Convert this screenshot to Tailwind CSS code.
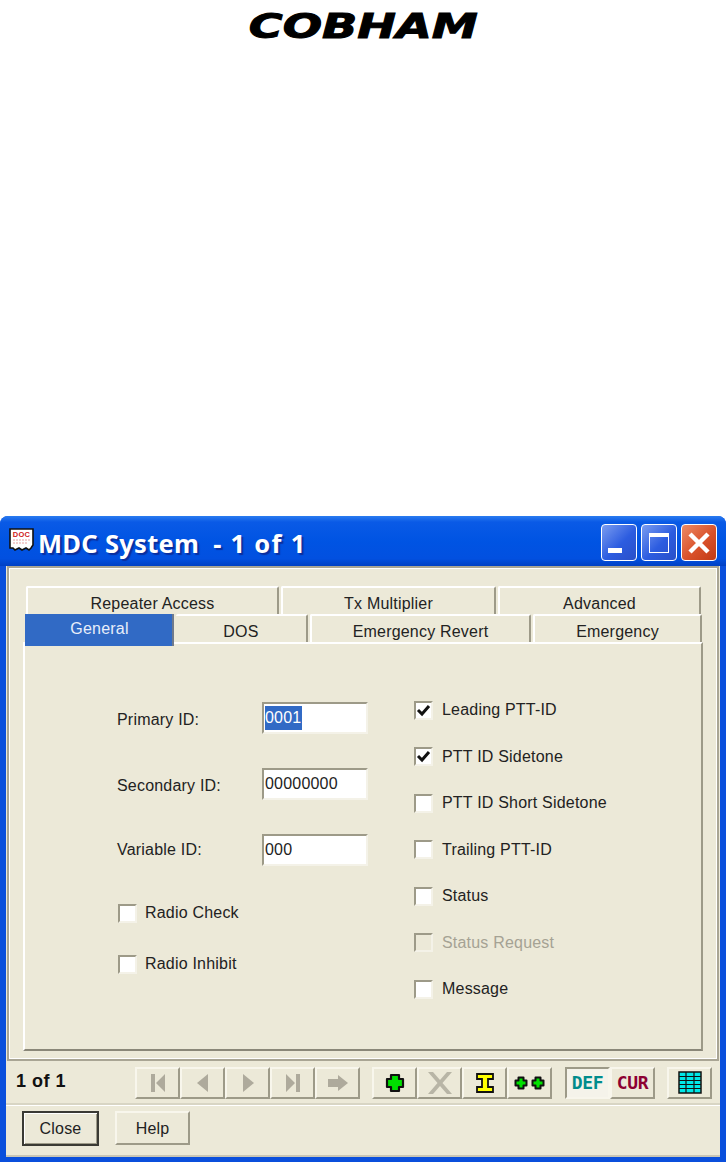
<!DOCTYPE html>
<html lang="en">
<head>
<meta charset="UTF-8">
<title>MDC System</title>
<script src="https://cdn.jsdelivr.net/npm/@tailwindcss/browser@4"></script>
</head>
<body class="bg-white font-['Liberation_Sans',sans-serif] text-[16px] tracking-[0.2px] text-[#222]">
<div class="w-[726px] h-[1162px] flex flex-col overflow-hidden">

  <!-- logo -->
  <div class="h-[516px] shrink-0 flex justify-center items-start pt-[8px]">
    <span class="font-['DejaVu_Sans',sans-serif] font-bold italic text-[34px] leading-[36px] tracking-normal text-black scale-x-[1.36] [-webkit-text-stroke:1px_black]">COBHAM</span>
  </div>

  <!-- window -->
  <div class="flex-1 flex flex-col rounded-t-[8px] bg-[#0a4fdc] px-[6px] pb-[5px]">
    <!-- title bar -->
    <div class="h-[50px] -mx-[6px] px-[9px] pt-[4px] shrink-0 flex items-center rounded-t-[8px] bg-[linear-gradient(to_bottom,#2a7cf0_0%,#0a5ae6_12%,#0054e3_50%,#0250e0_85%,#0040c4_100%)]">
      <svg class="w-[26px] h-[25px] shrink-0 -mt-[5px]" viewBox="0 0 26 25">
        <path d="M1 1H24V17L22 20L20 22L17 20L13 22L10 20L6 22L4 20H1Z" fill="#fff" stroke="#111" stroke-width="1.6"/>
        <text x="12.5" y="9" text-anchor="middle" font-family="Liberation Sans" font-weight="700" font-size="7.5" fill="#d01818">DOC</text>
        <path d="M4 12H21M4 15H19" stroke="#e8a0a0" stroke-width="1" stroke-dasharray="2 1"/>
      </svg>
      <span class="ml-[3px] font-['Noto_Sans',sans-serif] font-bold text-[25.5px] leading-[30px] tracking-[0.3px] text-white [text-shadow:2px_2px_1px_#0b2f9e] whitespace-pre">MDC System  <span class="tracking-[1.3px]">- 1 of 1</span></span>
      <div class="ml-auto flex gap-[4px] -mt-[1px]">
        <div class="w-[36px] h-[37px] rounded-[4px] border border-white flex items-end pl-[6px] pb-[7px] bg-[linear-gradient(135deg,#7a9cf0,#2c5ce0_55%,#2a4fc8)]">
          <div class="w-[14px] h-[5px] bg-white"></div>
        </div>
        <div class="w-[36px] h-[37px] rounded-[4px] border border-white flex items-center justify-center bg-[linear-gradient(135deg,#7a9cf0,#2c5ce0_55%,#2a4fc8)]">
          <div class="w-[20px] h-[20px] border border-white border-t-[4px]"></div>
        </div>
        <div class="w-[36px] h-[37px] rounded-[4px] border border-white flex items-center justify-center bg-[linear-gradient(135deg,#ec8a66,#d9512a_55%,#c23a15)]">
          <svg class="w-[24px] h-[24px]" viewBox="0 0 24 24"><path d="M3 3L21 21M21 3L3 21" stroke="#fff" stroke-width="4.5"/></svg>
        </div>
      </div>
    </div>

    <!-- client area -->
    <div class="flex-1 flex flex-col bg-[#ece9d8] min-h-0">
      <!-- sheet frame -->
      <div class="h-[495px] shrink-0 ml-[1px] mr-[1px] border-2 border-[#a9a594] px-[14px] pt-[18px] shadow-[inset_1px_1px_0_#fff,inset_-1px_-1px_0_#fff]">
        <!-- tab rows -->
        <div class="flex h-[28px] pl-[3px] gap-[2px]">
          <div class="w-[253px] flex items-center justify-center pt-[6px] rounded-t-[2px] border-t-2 border-l-2 border-r-2 border-t-white border-l-white border-r-[#9d9a88]">Repeater Access</div>
          <div class="w-[215px] flex items-center justify-center pt-[6px] rounded-t-[2px] border-t-2 border-l-2 border-r-2 border-t-white border-l-white border-r-[#9d9a88]">Tx Multiplier</div>
          <div class="w-[203px] flex items-center justify-center pt-[6px] rounded-t-[2px] border-t-2 border-l-2 border-r-2 border-t-white border-l-white border-r-[#9d9a88]">Advanced</div>
        </div>
        <div class="flex h-[28px] pl-[2px] gap-[2px] relative z-10">
          <div class="w-[149px] h-[32px] flex items-center justify-center pb-[3px] pl-[2px] bg-[#316ac5] text-[#e8eefa] border-r-2 border-r-[#6f7a8c]">General</div>
          <div class="w-[132px] flex items-center justify-center pt-[6px] rounded-t-[2px] border-t-2 border-r-2 border-t-white border-r-[#9d9a88]">DOS</div>
          <div class="w-[221px] flex items-center justify-center pt-[6px] rounded-t-[2px] border-t-2 border-l-2 border-r-2 border-t-white border-l-white border-r-[#9d9a88]">Emergency Revert</div>
          <div class="w-[169px] flex items-center justify-center pt-[6px] rounded-t-[2px] border-t-2 border-l-2 border-r-2 border-t-white border-l-white border-r-[#9d9a88]">Emergency</div>
        </div>

        <!-- tab pane -->
        <div class="h-[409px] border-2 border-t-white border-l-white border-r-[#9d9a88] border-b-[#8a8778] flex pl-[92px] pt-[58px]">
          <!-- left column -->
          <div class="w-[297px] shrink-0 flex flex-col">
            <div class="flex items-center h-[32px] mb-[34px]">
              <span class="w-[145px] pt-[4px]">Primary ID:</span>
              <div class="w-[106px] h-[32px] bg-white border-2 border-t-[#9d9a88] border-l-[#9d9a88] border-r-[#f4f2e8] border-b-[#f4f2e8] flex items-center pl-[1px]"><span class="bg-[#316ac5] text-white leading-[24px] pr-[1px]">0001</span></div>
            </div>
            <div class="flex items-center h-[32px] mb-[34px]">
              <span class="w-[145px] pt-[4px]">Secondary ID:</span>
              <div class="w-[106px] h-[32px] bg-white border-2 border-t-[#9d9a88] border-l-[#9d9a88] border-r-[#f4f2e8] border-b-[#f4f2e8] flex items-center pl-[1px]">00000000</div>
            </div>
            <div class="flex items-center h-[32px] mb-[37px]">
              <span class="w-[145px]">Variable ID:</span>
              <div class="w-[106px] h-[32px] bg-white border-2 border-t-[#9d9a88] border-l-[#9d9a88] border-r-[#f4f2e8] border-b-[#f4f2e8] flex items-center pl-[1px]">000</div>
            </div>
            <div class="flex items-center h-[20px] mb-[31px] pl-[1px]">
              <div class="w-[19px] h-[19px] bg-white border-2 border-t-[#9d9a88] border-l-[#9d9a88] border-r-[#f4f2e8] border-b-[#f4f2e8]"></div>
              <span class="ml-[8px]">Radio Check</span>
            </div>
            <div class="flex items-center h-[20px] pl-[1px]">
              <div class="w-[19px] h-[19px] bg-white border-2 border-t-[#9d9a88] border-l-[#9d9a88] border-r-[#f4f2e8] border-b-[#f4f2e8]"></div>
              <span class="ml-[8px]">Radio Inhibit</span>
            </div>
          </div>
          <!-- right column -->
          <div class="flex flex-col gap-[26.5px] -mt-[2px]">
            <div class="flex items-center h-[20px]">
              <div class="w-[19px] h-[19px] bg-white border-2 border-t-[#9d9a88] border-l-[#9d9a88] border-r-[#f4f2e8] border-b-[#f4f2e8] flex items-center justify-center">
                <svg class="w-[15px] h-[15px]" viewBox="0 0 15 15"><path d="M2 7L6 11L13 3" fill="none" stroke="#111" stroke-width="3"/></svg>
              </div>
              <span class="ml-[9px]">Leading PTT-ID</span>
            </div>
            <div class="flex items-center h-[20px]">
              <div class="w-[19px] h-[19px] bg-white border-2 border-t-[#9d9a88] border-l-[#9d9a88] border-r-[#f4f2e8] border-b-[#f4f2e8] flex items-center justify-center">
                <svg class="w-[15px] h-[15px]" viewBox="0 0 15 15"><path d="M2 7L6 11L13 3" fill="none" stroke="#111" stroke-width="3"/></svg>
              </div>
              <span class="ml-[9px]">PTT ID Sidetone</span>
            </div>
            <div class="flex items-center h-[20px]">
              <div class="w-[19px] h-[19px] bg-white border-2 border-t-[#9d9a88] border-l-[#9d9a88] border-r-[#f4f2e8] border-b-[#f4f2e8]"></div>
              <span class="ml-[9px]">PTT ID Short Sidetone</span>
            </div>
            <div class="flex items-center h-[20px]">
              <div class="w-[19px] h-[19px] bg-white border-2 border-t-[#9d9a88] border-l-[#9d9a88] border-r-[#f4f2e8] border-b-[#f4f2e8]"></div>
              <span class="ml-[9px]">Trailing PTT-ID</span>
            </div>
            <div class="flex items-center h-[20px]">
              <div class="w-[19px] h-[19px] bg-white border-2 border-t-[#9d9a88] border-l-[#9d9a88] border-r-[#f4f2e8] border-b-[#f4f2e8]"></div>
              <span class="ml-[9px]">Status</span>
            </div>
            <div class="flex items-center h-[20px]">
              <div class="w-[19px] h-[19px] bg-[#ece9d8] border-2 border-t-[#9d9a88] border-l-[#9d9a88] border-r-[#f4f2e8] border-b-[#f4f2e8]"></div>
              <span class="ml-[9px] text-[#a5a294]">Status Request</span>
            </div>
            <div class="flex items-center h-[20px]">
              <div class="w-[19px] h-[19px] bg-white border-2 border-t-[#9d9a88] border-l-[#9d9a88] border-r-[#f4f2e8] border-b-[#f4f2e8]"></div>
              <span class="ml-[9px]">Message</span>
            </div>
          </div>
        </div>
      </div>

      <!-- toolbar -->
      <div class="h-[44px] pt-[1px] shrink-0 flex items-center pl-[10px] border-b-2 border-b-[#d8d5c4] shadow-[0_1px_0_#fff]">
        <span class="w-[119px] shrink-0 font-bold text-[18px] tracking-[0.5px] -mt-[3px] text-[#111]">1 of 1</span>
        <div class="flex">
          <div class="w-[45px] h-[32px] flex items-center justify-center border-2 border-t-[#f8f6ec] border-l-[#f8f6ec] border-r-[#9d9a88] border-b-[#9d9a88]"><svg class="w-[18px] h-[18px]" viewBox="0 0 18 18"><path d="M2 0H6V18H2ZM16 0V18L7 9Z" fill="#aeaa9c"/></svg></div>
          <div class="w-[45px] h-[32px] flex items-center justify-center border-2 border-t-[#f8f6ec] border-l-[#f8f6ec] border-r-[#9d9a88] border-b-[#9d9a88]"><svg class="w-[18px] h-[18px]" viewBox="0 0 18 18"><path d="M14 0V18L3 9Z" fill="#aeaa9c"/></svg></div>
          <div class="w-[45px] h-[32px] flex items-center justify-center border-2 border-t-[#f8f6ec] border-l-[#f8f6ec] border-r-[#9d9a88] border-b-[#9d9a88]"><svg class="w-[18px] h-[18px]" viewBox="0 0 18 18"><path d="M4 0V18L15 9Z" fill="#aeaa9c"/></svg></div>
          <div class="w-[45px] h-[32px] flex items-center justify-center border-2 border-t-[#f8f6ec] border-l-[#f8f6ec] border-r-[#9d9a88] border-b-[#9d9a88]"><svg class="w-[18px] h-[18px]" viewBox="0 0 18 18"><path d="M2 0V18L11 9ZM12 0H16V18H12Z" fill="#aeaa9c"/></svg></div>
          <div class="w-[45px] h-[32px] flex items-center justify-center border-2 border-t-[#f8f6ec] border-l-[#f8f6ec] border-r-[#9d9a88] border-b-[#9d9a88]"><svg class="w-[22px] h-[18px]" viewBox="0 0 22 18"><path d="M1 5H11V1L21 9L11 17V13H1Z" fill="#aeaa9c"/></svg></div>
        </div>
        <div class="flex ml-[12px]">
          <div class="w-[45px] h-[32px] flex items-center justify-center border-2 border-t-[#f8f6ec] border-l-[#f8f6ec] border-r-[#9d9a88] border-b-[#9d9a88]"><svg class="w-[20px] h-[20px]" viewBox="0 0 20 20"><path d="M6 2H14V6H18V14H14V18H6V14H2V6H6Z" fill="#00e000" stroke="#111" stroke-width="2.2" stroke-linejoin="round"/></svg></div>
          <div class="w-[45px] h-[32px] flex items-center justify-center border-2 border-t-[#f8f6ec] border-l-[#f8f6ec] border-r-[#9d9a88] border-b-[#9d9a88]"><svg class="w-[26px] h-[24px]" viewBox="0 0 26 24"><path d="M1 1H6L13 9L20 1H25L15.5 12L25 23H20L13 15L6 23H1L10.500 12Z" fill="#b8b5a6"/></svg></div>
          <div class="w-[45px] h-[32px] flex items-center justify-center border-2 border-t-[#f8f6ec] border-l-[#f8f6ec] border-r-[#9d9a88] border-b-[#9d9a88]"><svg class="w-[18px] h-[20px]" viewBox="0 0 18 20"><path d="M1 1H17V6H12V14H17V19H1V14H6V6H1Z" fill="#ffff00" stroke="#111" stroke-width="1.8"/></svg></div>
          <div class="w-[45px] h-[32px] flex items-center justify-center gap-[3px] border-2 border-t-[#f8f6ec] border-l-[#f8f6ec] border-r-[#9d9a88] border-b-[#9d9a88]">
            <svg class="w-[14px] h-[14px]" viewBox="0 0 14 14"><path d="M4.500 1.500H9.500V4.500H12.500V9.500H9.500V12.500H4.500V9.500H1.500V4.500H4.500Z" fill="#00e000" stroke="#111" stroke-width="2" stroke-linejoin="round"/></svg>
            <svg class="w-[14px] h-[14px]" viewBox="0 0 14 14"><path d="M4.500 1.500H9.500V4.500H12.500V9.500H9.500V12.500H4.500V9.500H1.500V4.500H4.500Z" fill="#00e000" stroke="#111" stroke-width="2" stroke-linejoin="round"/></svg>
          </div>
        </div>
        <div class="flex ml-[13px]">
          <div class="w-[45px] h-[32px] flex items-center justify-center font-['DejaVu_Sans_Mono',monospace] font-bold text-[18px] tracking-[-0.3px] text-[#008c8c] bg-[#f5f3ea] border-2 border-t-[#9d9a88] border-l-[#9d9a88] border-r-[#f8f6ec] border-b-[#f8f6ec]">DEF</div>
          <div class="w-[45px] h-[32px] flex items-center justify-center font-['DejaVu_Sans_Mono',monospace] font-bold text-[18px] tracking-[-0.3px] text-[#8c0032] border-2 border-t-[#f8f6ec] border-l-[#f8f6ec] border-r-[#9d9a88] border-b-[#9d9a88]">CUR</div>
        </div>
        <div class="ml-[12px] w-[45px] h-[32px] flex items-center justify-center border-2 border-t-[#f8f6ec] border-l-[#f8f6ec] border-r-[#9d9a88] border-b-[#9d9a88]">
          <svg class="w-[24px] h-[23px]" viewBox="0 0 24 23"><rect x="1" y="1" width="22" height="21" fill="#00e8e8" stroke="#111" stroke-width="1.5"/><path d="M1 5.500H23M1 9.500H23M1 13.500H23M1 17.500H23M8 1V22M16 1V22" stroke="#111" stroke-width="1.2"/></svg>
        </div>
      </div>

      <!-- bottom buttons -->
      <div class="flex-1 flex gap-[16px] pl-[16px] pt-[6px] border-b-2 border-b-[#c9c6b6]">
        <div class="w-[77px] h-[35px] flex items-center justify-center border-2 border-[#3a3a34] shadow-[inset_1px_1px_0_#fff,inset_-1px_-1px_0_#9d9a88]">Close</div>
        <div class="w-[75px] h-[34px] pt-[1px] flex items-center justify-center border-2 border-t-[#f8f6ec] border-l-[#f8f6ec] border-r-[#9d9a88] border-b-[#9d9a88]">Help</div>
      </div>
    </div>
  </div>
</div>
</body>
</html>
